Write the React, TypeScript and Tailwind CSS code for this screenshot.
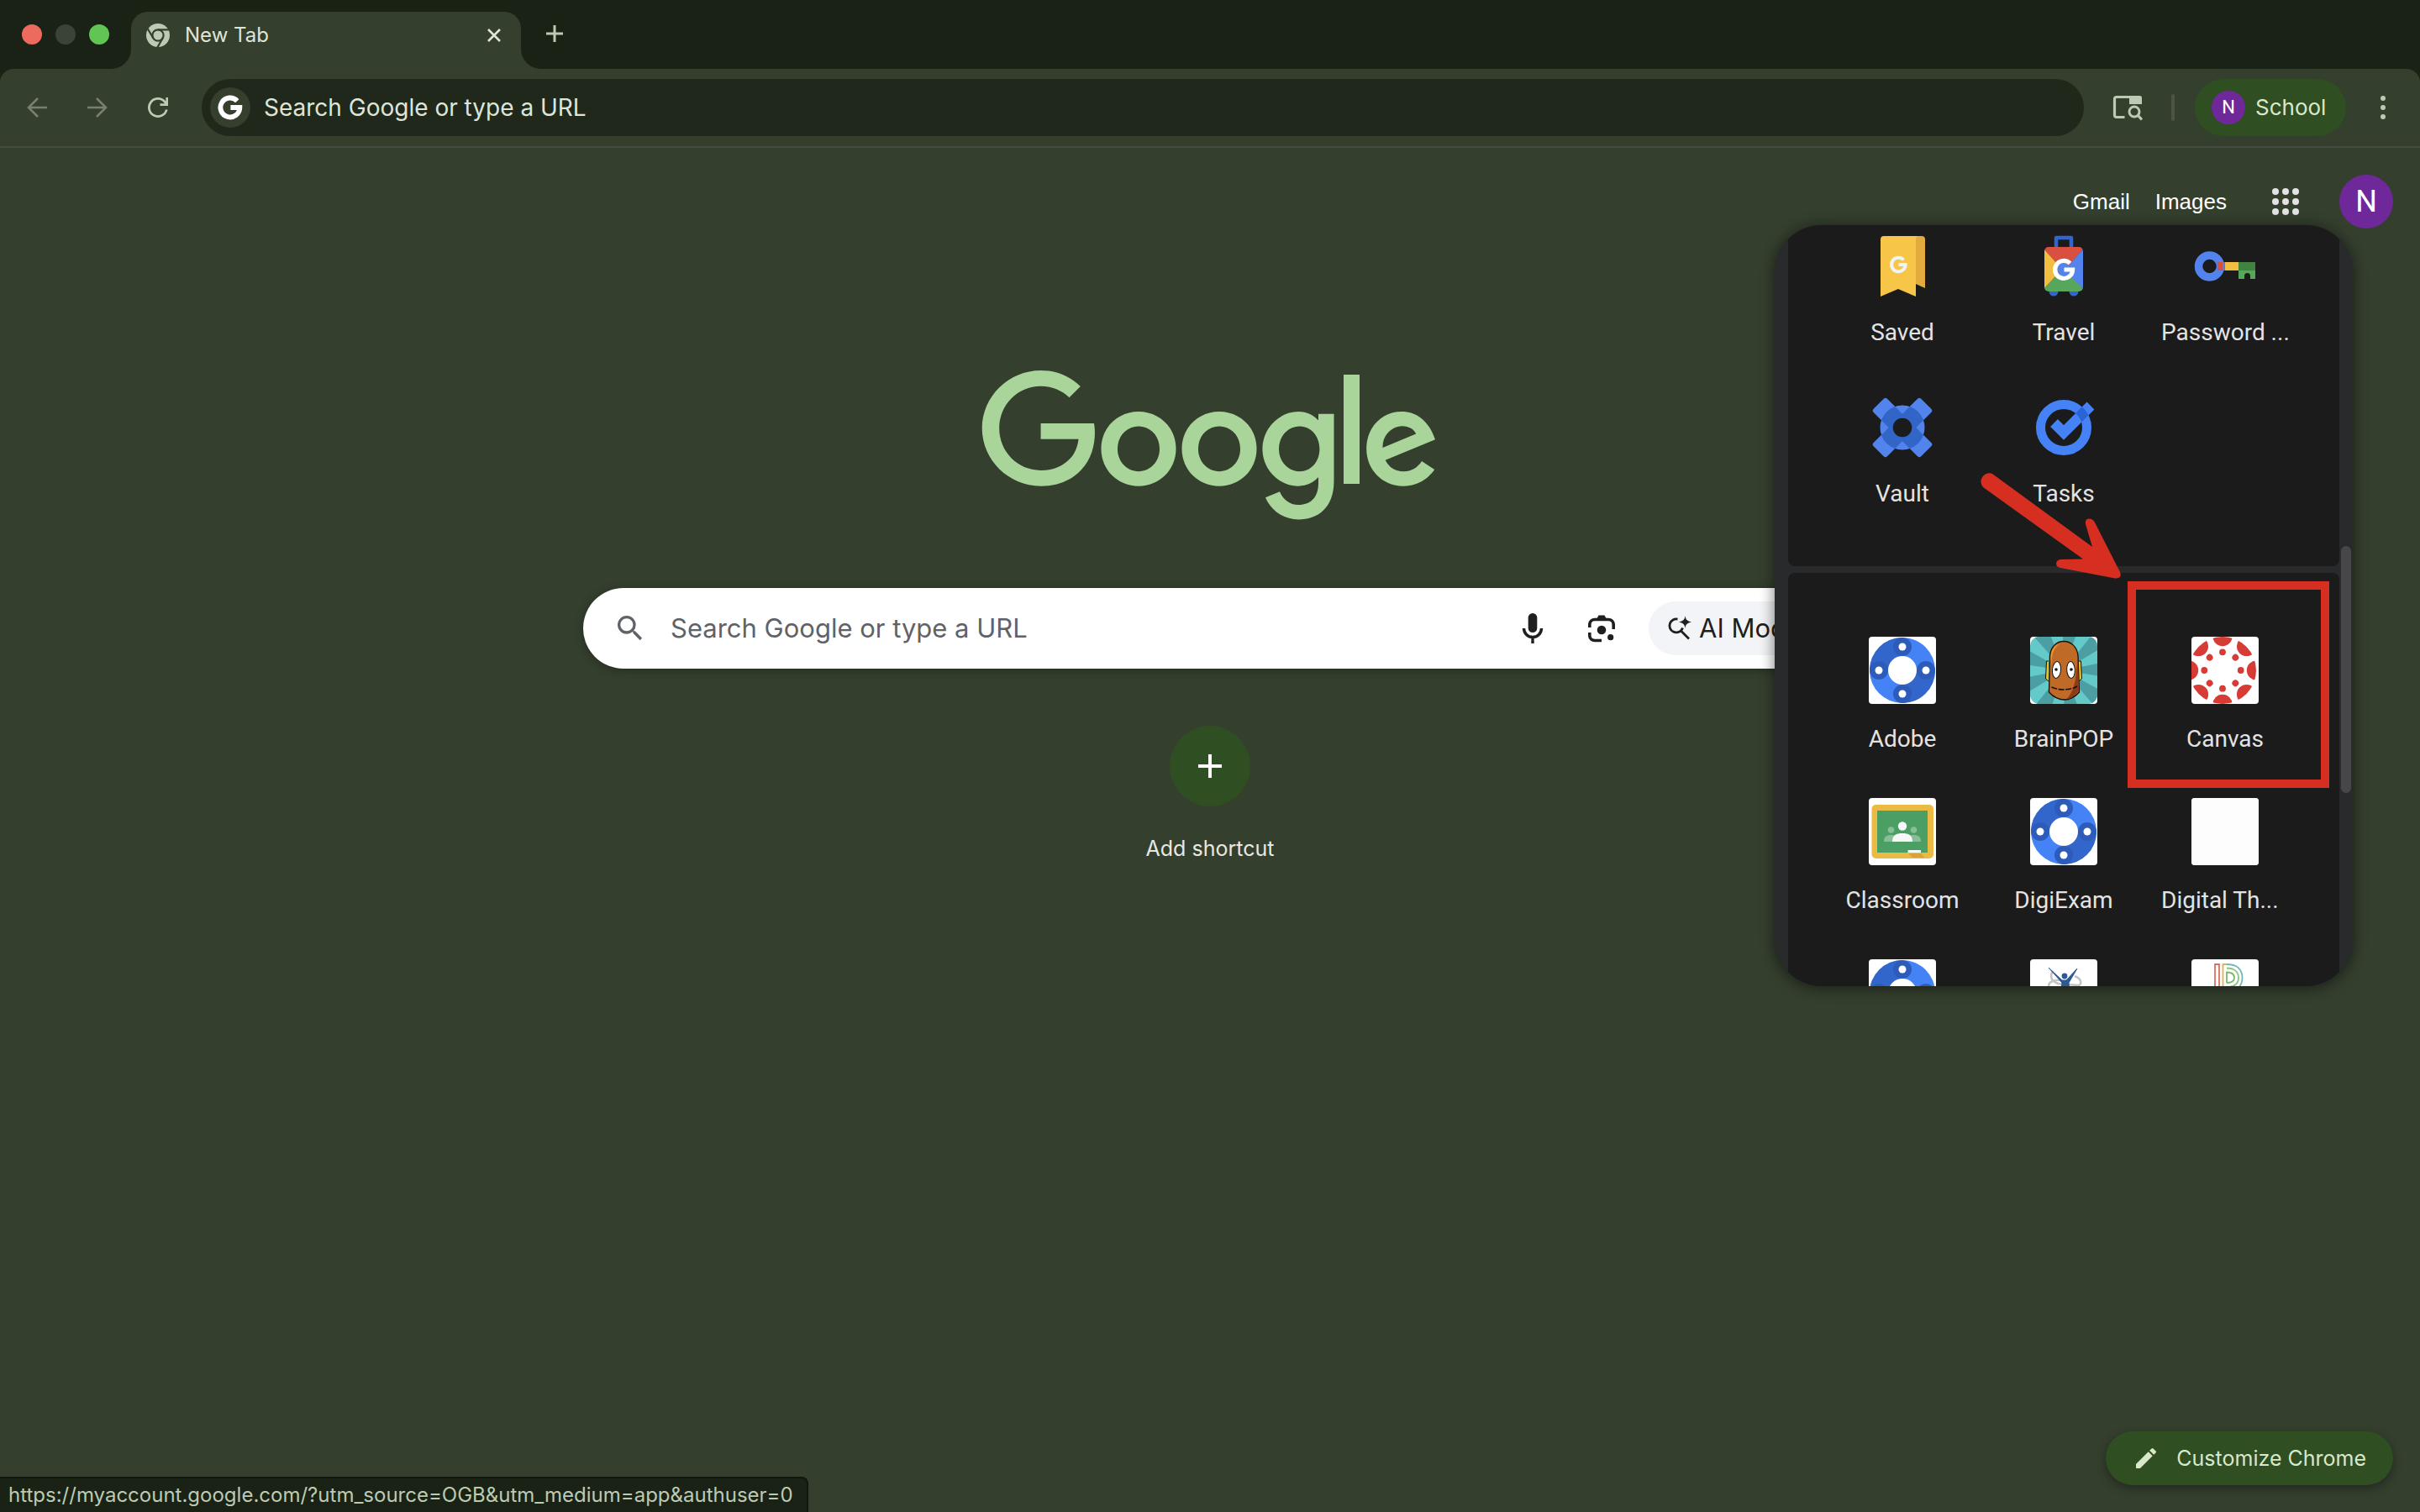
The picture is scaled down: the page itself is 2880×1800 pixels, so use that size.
import React, { useId } from "react";

const ui = "font-['Inter',sans-serif]";
const product = "font-['Roboto',sans-serif]";

function GoogleG({ className }: { className?: string }) {
  return (
    <svg viewBox="0 0 24 24" className={className} fill="none" stroke="currentColor" strokeWidth="4.4" aria-hidden="true">
      <path d="M18.2 6.1A8.6 8.6 0 1 0 20.5 12H12.3" />
    </svg>
  );
}

function ChromeMark() {
  return (
    <svg viewBox="0 0 28 28" className="size-7" aria-hidden="true">
      <circle cx="14" cy="14" r="14" fill="#bdcab3" />
      <g fill="none" stroke="#343f2e" strokeWidth="2.2">
        <circle cx="14" cy="14" r="6.6" />
        <path d="M14 7.4H27M8.3 17.3L1.6 6M19.7 17.3L13.4 28.4" />
      </g>
    </svg>
  );
}

function GoogleLogo() {
  return (
    <svg viewBox="0 0 272 92" className="h-46 w-136" fill="#a9d49a" role="img" aria-label="Google">
      <path d="M35.29 41.41V32H67c.31 1.64.47 3.58.47 5.68 0 7.06-1.93 15.79-8.15 22.01-6.05 6.3-13.78 9.66-24.02 9.66C16.32 69.35.36 53.89.36 34.91.36 15.93 16.32.47 35.3.47c10.5 0 17.98 4.12 23.6 9.49l-6.64 6.64c-4.03-3.78-9.49-6.72-16.97-6.72-13.86 0-24.7 11.17-24.7 25.03 0 13.86 10.84 25.03 24.7 25.03 8.99 0 14.11-3.61 17.39-6.89 2.66-2.66 4.41-6.46 5.1-11.65l-22.49.01z" />
      <path d="M115.75 47.18c0 12.77-9.99 22.18-22.25 22.18s-22.25-9.41-22.25-22.18C71.25 34.32 81.24 25 93.5 25s22.25 9.32 22.25 22.18zm-9.74 0c0-7.98-5.79-13.44-12.51-13.44S80.99 39.2 80.99 47.18c0 7.9 5.79 13.44 12.51 13.44s12.51-5.55 12.51-13.44z" />
      <path d="M163.75 47.18c0 12.77-9.99 22.18-22.25 22.18s-22.25-9.41-22.25-22.18c0-12.85 9.99-22.18 22.25-22.18s22.25 9.32 22.25 22.18zm-9.74 0c0-7.98-5.79-13.44-12.51-13.44s-12.51 5.46-12.51 13.44c0 7.9 5.79 13.44 12.51 13.44s12.51-5.55 12.51-13.44z" />
      <path d="M209.75 26.34v39.82c0 16.38-9.66 23.07-21.08 23.07-10.75 0-17.22-7.19-19.66-13.07l8.48-3.53c1.51 3.61 5.21 7.87 11.17 7.87 7.31 0 11.84-4.51 11.84-13v-3.19h-.34c-2.18 2.69-6.38 5.04-11.68 5.04-11.09 0-21.25-9.66-21.25-22.09 0-12.52 10.16-22.26 21.25-22.26 5.29 0 9.49 2.35 11.68 4.96h.34v-3.61h9.25zm-8.56 20.92c0-7.81-5.21-13.52-11.84-13.52-6.72 0-12.35 5.71-12.35 13.52 0 7.73 5.63 13.36 12.35 13.36 6.63 0 11.84-5.63 11.84-13.36z" />
      <path d="M225 3v65h-9.5V3h9.5z" />
      <path d="M262.02 54.48l7.56 5.04c-2.44 3.61-8.32 9.83-18.48 9.83-12.6 0-22.01-9.74-22.01-22.18 0-13.19 9.49-22.18 20.92-22.18 11.51 0 17.14 9.16 18.98 14.11l1.01 2.52-29.65 12.28c2.27 4.45 5.8 6.72 10.75 6.72 4.96 0 8.4-2.44 10.92-6.14zm-23.27-7.98l19.82-8.23c-1.09-2.77-4.37-4.7-8.23-4.7-4.95 0-11.84 4.37-11.59 12.93z" />
    </svg>
  );
}

/* ---------- App icons, each on an 80 x 80 grid ---------- */

function Art({ children, tile = false }: { children?: React.ReactNode; tile?: boolean }) {
  return (
    <svg viewBox="0 0 80 80" className={tile ? "size-20 shrink-0 rounded-[4px] bg-white" : "size-20 shrink-0"} aria-hidden="true">
      {children}
    </svg>
  );
}

function SavedIcon() {
  return (
    <Art>
      <path d="M54 4H63a4 4 0 0 1 4 4V66L56 61z" fill="#e2aa3f" />
      <path d="M60 4a4 4 0 0 0-4 4V76L35 67L14 76V8a4 4 0 0 1 4-4z" fill="#f7c548" />
      <path d="M41.500 32.500A8.300 8.300 0 1 0 43.600 38H35.500" fill="none" stroke="#f1f3f4" strokeWidth="4" />
    </Art>
  );
}

function TravelIcon() {
  const clip = useId();
  return (
    <Art>
      <clipPath id={clip}>
        <rect x="17" y="17" width="46" height="53" rx="5" />
      </clipPath>
      <path d="M31 19V6H49V19" fill="none" stroke="#3166ce" strokeWidth="4.500" strokeLinejoin="round" />
      <circle cx="28" cy="70" r="5.500" fill="#3166ce" />
      <circle cx="52" cy="70" r="5.500" fill="#3166ce" />
      <g clipPath={`url(#${clip})`}>
        <path d="M17 17H63V20L40 46L17 20z" fill="#d8503f" />
        <path d="M17 70H63V66L40 41L17 66z" fill="#58a55c" />
        <path d="M17 20L38 43.500L17 66z" fill="#f2be42" />
        <path d="M63 20L40 45L63 66z" fill="#5383ec" />
      </g>
      <circle cx="40" cy="44" r="8" fill="#5383ec" />
      <path d="M47.500 36.500A10.500 10.500 0 1 0 50.600 44H40.500" fill="none" stroke="#fff" strokeWidth="5.200" />
    </Art>
  );
}

function PasswordIcon() {
  return (
    <Art>
      <path d="M30 35H40V45H30z" fill="#d8503f" />
      <path d="M40 35H56V45H40z" fill="#f2be42" />
      <path d="M56 35H76V45H56z" fill="#40823f" />
      <path d="M56 45H76V55H70V51.500a3.500 3.500 0 0 0-7 0V55H56z" fill="#58a55c" />
      <circle cx="21.500" cy="40" r="13" fill="none" stroke="#5383ec" strokeWidth="9.500" />
      <path d="M30.500 35H37V45H30.500A13 13 0 0 0 30.500 35z" fill="#d8503f" />
    </Art>
  );
}

function VaultIcon() {
  const clip = useId();
  const hole = useId();
  const arms = (
    <>
      <rect x="0" y="28.500" width="80" height="23" rx="3" transform="rotate(45 40 40)" />
      <rect x="0" y="28.500" width="80" height="23" rx="3" transform="rotate(-45 40 40)" />
    </>
  );
  return (
    <Art>
      <clipPath id={clip}>
        <circle cx="40" cy="40" r="26.500" />
      </clipPath>
      <mask id={hole}>
        <rect width="80" height="80" fill="#fff" />
        <circle cx="40" cy="40" r="11.300" fill="#000" />
      </mask>
      <g mask={`url(#${hole})`}>
        <g fill="#5383ec">
          {arms}
          <circle cx="40" cy="40" r="26.500" />
        </g>
        <g fill="#3166c8" clipPath={`url(#${clip})`}>{arms}</g>
      </g>
    </Art>
  );
}

function TasksIcon() {
  const clip = useId();
  return (
    <Art>
      <clipPath id={clip}>
        <path d="M40 7a33 33 0 1 0 .01 0zM40 18a22 22 0 1 1-.01 0z" clipRule="evenodd" />
      </clipPath>
      <circle cx="40" cy="40" r="27.500" fill="none" stroke="#4482f5" strokeWidth="11" />
      <path d="M28.500 34.500L40 46L72 14" fill="none" stroke="#4482f5" strokeWidth="12.500" />
      <path d="M52 34L72 14" fill="none" stroke="#2a63d3" strokeWidth="12.500" clipPath={`url(#${clip})`} />
    </Art>
  );
}

function DialIcon() {
  return (
    <Art tile>
      <circle cx="40" cy="40" r="39" fill="#4482f5" />
      <path d="M40 40V1A39 39 0 0 0 1 40zM40 40V79A39 39 0 0 0 79 40z" fill="#3366cb" />
      {[[40, 12], [40, 68], [12, 40], [68, 40]].map(([x, y]) => (
        <g key={`${x}-${y}`}>
          <circle cx={x} cy={y} r="11" fill="#2d5bb9" />
          <circle cx={x} cy={y} r="4.500" fill="#fff" />
        </g>
      ))}
      <circle cx="40" cy="40" r="17" fill="#fff" />
    </Art>
  );
}

function BrainPopIcon() {
  const clip = useId();
  return (
    <Art tile>
      <clipPath id={clip}>
        <rect width="80" height="80" rx="11" />
      </clipPath>
      <g clipPath={`url(#${clip})`}>
        <rect width="80" height="80" fill="#63c9c9" />
        {[0, 1, 2, 3, 4, 5, 6, 7, 8].map((i) => (
          <path key={i} d="M40 40L48 -30L72 -22z" fill="#4b9fa2" transform={`rotate(${i * 40 - 8} 40 40)`} />
        ))}
      </g>
      <path d="M22 29H19.500L18.500 50L22 53M58 29H60.500L61.500 50L58 53" fill="#e8c22c" stroke="#111" strokeWidth="1" />
      <path d="M22.500 66L23.500 22C25 11 32 5.500 40 5.500S55.500 11 57 22L58.500 66C53 72 47 75 41 75S28 72 22.500 66z" fill="#c06a27" stroke="#1a0f06" strokeWidth="1.300" />
      <path d="M58 64C53 71 48 74 43 74.500C51 67 54 55 55 40L57 25z" fill="#8f3b17" />
      <path d="M25.500 34C25 20 29 11 37 7.500C28 10 24.500 17 24.500 26z" fill="#f0962f" />
      <g fill="#fff" stroke="#111" strokeWidth="1">
        <ellipse cx="31.500" cy="39.500" rx="5" ry="10" transform="rotate(5 31.500 39.500)" />
        <ellipse cx="48.500" cy="39.500" rx="4.800" ry="10" transform="rotate(-3 48.500 39.500)" />
      </g>
      <circle cx="31" cy="39" r="1.800" fill="#111" />
      <circle cx="49" cy="39" r="1.800" fill="#111" />
      <path d="M25.500 60C34 64 48 64 56 59" fill="none" stroke="#1a0f06" strokeWidth="1.500" strokeDasharray="7 1.500" />
    </Art>
  );
}

function CanvasIcon() {
  const clip = useId();
  return (
    <Art tile>
      <clipPath id={clip}>
        <circle cx="37" cy="40" r="40" />
      </clipPath>
      <g fill="#d63c35">
        {[0, 45, 90, 135, 180, 225, 270, 315].map((a) => (
          <g key={a} transform={`rotate(${a} 37 40)`}>
            <circle cx="37" cy="18.300" r="3.900" />
            <g clipPath={`url(#${clip})`}>
              <circle cx="37" cy="-.5" r="11.700" />
            </g>
          </g>
        ))}
      </g>
    </Art>
  );
}

function ClassroomIcon() {
  return (
    <Art tile>
      <rect x="3.500" y="8" width="73.500" height="64" rx="5" fill="#ebba42" />
      <rect x="10" y="15" width="60" height="50" fill="#4c9f64" />
      <g fill="#86bf97">
        <circle cx="26.500" cy="38" r="3.800" />
        <circle cx="53.500" cy="38" r="3.800" />
        <path d="M18 52c0-6 3-8 8.500-8s8 2 8 8zM45.500 52c0-6 2.500-8 8-8s8.500 2 8.500 8z" />
      </g>
      <g fill="#f6f7f6">
        <circle cx="40" cy="33.500" r="5.200" />
        <path d="M28 52c0-8 5-10 12-10s12 2 12 10z" />
        <rect x="46.500" y="62" width="15.500" height="3.500" />
      </g>
      <path d="M46.500 65.500H62L66 71H52z" fill="#d9a437" />
    </Art>
  );
}

function DigitalIcon() {
  return (
    <Art tile>
      <rect width="80" height="80" fill="#fdfdfd" />
    </Art>
  );
}

function FigureIcon() {
  return (
    <Art tile>
      <g fill="none" stroke="#c4c4c4" strokeWidth="2.500">
        <path d="M27 14C21 24 30 30 42 30S62 34 60 26C59 23 56 21 53 20" />
        <path d="M22 32C22 27 28 24 38 25" />
      </g>
      <path d="M22 10L38 28L36 42H47L46 28L56 11L43 25H38z" fill="#2d5a96" stroke="#2d5a96" strokeLinejoin="round" />
      <circle cx="41" cy="20" r="3.400" fill="#2d5a96" />
    </Art>
  );
}

function StripesIcon() {
  return (
    <Art tile>
      <g fill="none" strokeWidth="1.800">
        <path d="M28 60V6H33V60" stroke="#dd6f5f" />
        <path d="M37.500 60V6H43" stroke="#e2b04e" />
        <path d="M42 6C54 6 60.500 12 60.500 22S54 38 43 38" stroke="#6db8b8" />
        <path d="M42 10.500C51 10.500 56 15 56 22S51 33 42 33V60" stroke="#8fc27a" />
        <path d="M42 28V15.500C48 15.500 51 18 51 22S48 28 42 28" stroke="#7ab86a" />
      </g>
    </Art>
  );
}

type App = { name: string; icon: React.ReactNode; clipped?: boolean };

const googleApps: App[] = [
  { name: "Saved", icon: <SavedIcon /> },
  { name: "Travel", icon: <TravelIcon /> },
  { name: "Password ...", icon: <PasswordIcon />, clipped: true },
  { name: "Vault", icon: <VaultIcon /> },
  { name: "Tasks", icon: <TasksIcon /> },
];

const schoolApps: App[] = [
  { name: "Adobe", icon: <DialIcon /> },
  { name: "BrainPOP", icon: <BrainPopIcon /> },
  { name: "Canvas", icon: <CanvasIcon /> },
  { name: "Classroom", icon: <ClassroomIcon /> },
  { name: "DigiExam", icon: <DialIcon /> },
  { name: "Digital Th...", icon: <DigitalIcon />, clipped: true },
];

const moreIcons = [<DialIcon />, <FigureIcon />, <StripesIcon />];

function AppTile({ app, gap }: { app: App; gap: string }) {
  return (
    <a href="#" className={`flex h-48 flex-col items-center ${gap}`}>
      {app.icon}
      <span className={app.clipped ? "w-[152px] text-left text-[28px] leading-10 whitespace-nowrap" : "text-[28px] leading-10 whitespace-nowrap"}>
        {app.name}
      </span>
    </a>
  );
}

function AppsPanel() {
  return (
    <div className="absolute top-[92px] right-20">
      <div className={`flex h-[906px] w-[688px] overflow-hidden rounded-[56px] bg-[#292a2c] pl-4 text-[#e3e3e3] shadow-[0_2px_16px_2px_rgba(0,0,0,0.45)] ${product}`}>
        <div className="flex flex-1 flex-col gap-2">
          <div className="grid shrink-0 grid-cols-3 rounded-b-lg bg-[#1b1b1b] px-10 pt-[9px] pb-[13px]">
            {googleApps.map((app) => (
              <AppTile key={app.name} app={app} gap="gap-[19px]" />
            ))}
          </div>
          <div className="grid shrink-0 grid-cols-3 rounded-t-lg bg-[#1b1b1b] px-10 pt-19">
            {schoolApps.map((app) => (
              <AppTile key={app.name} app={app} gap="gap-[22px]" />
            ))}
            {moreIcons.map((icon, i) => (
              <a key={i} href="#" aria-label="School app" className="flex h-48 justify-center">
                {icon}
              </a>
            ))}
          </div>
        </div>
        <div className="w-4 px-[2px] pt-[382px]">
          <div className="h-[294px] rounded-full bg-[#474749]" />
        </div>
      </div>

      <div className="absolute top-[424px] right-7 h-[246px] w-60 border-10 border-[#d62f22]" />
      <svg viewBox="0 0 180 140" className="absolute top-[287px] left-[238px] h-[140px] w-[180px]" aria-hidden="true">
        <path
          d="M21 9L140 96L132 69Q131 63 136 62.500Q141 62.500 143 67L173 126Q176 133.500 167 133.500L102 121Q97 120 97 115.500Q98 111 103 111L129 110.500L10 25A10 10 0 0 1 21 9z"
          fill="#d62f22"
        />
      </svg>
    </div>
  );
}

function BrowserChrome() {
  return (
    <header className={`bg-[#192214] ${ui}`}>
      <div className="flex h-[82px] items-end">
        <div className="flex items-center gap-4 self-center pr-[2px] pl-[26px]">
          <button aria-label="Close window" className="size-6 rounded-full bg-[#ec6a5e]" />
          <button aria-label="Minimise window" className="size-6 rounded-full bg-[#3a4338]" />
          <button aria-label="Zoom window" className="size-6 rounded-full bg-[#61c554]" />
        </div>
        <div className="size-6 bg-[#343f2e]">
          <div className="size-full rounded-br-3xl bg-[#192214]" />
        </div>
        <div className="flex h-[68px] w-116 items-center rounded-t-[20px] bg-[#343f2e] pr-5 pb-3 pl-[18px]">
          <ChromeMark />
          <span className="ml-[18px] flex-1 text-[24px] leading-8 text-[#dfe4d8]">New Tab</span>
          <button aria-label="Close tab" className="flex size-6 items-center justify-center">
            <svg viewBox="0 0 16 16" className="size-4" stroke="#e0e4da" strokeWidth="2.6" aria-hidden="true">
              <path d="M1 1L15 15M15 1L1 15" />
            </svg>
          </button>
        </div>
        <div className="size-6 bg-[#343f2e]">
          <div className="size-full rounded-bl-3xl bg-[#192214]" />
        </div>
        <button aria-label="New tab" className="mb-8 ml-[6px] flex size-5 items-center justify-center">
          <svg viewBox="0 0 20 20" className="size-5" stroke="#bdcab3" strokeWidth="3" aria-hidden="true">
            <path d="M10 0V20M0 10H20" />
          </svg>
        </button>
      </div>

      <div className="flex h-[94px] items-center rounded-t-2xl border-b-2 border-[#464b41] bg-[#343f2e] pl-8">
        <button aria-label="Back" className="size-6">
          <svg viewBox="0 0 24 24" className="size-6" fill="none" stroke="#778070" strokeWidth="2.6" aria-hidden="true">
            <path d="M24 12H2M13 1L2 12L13 23" />
          </svg>
        </button>
        <button aria-label="Forward" className="ml-12 size-6">
          <svg viewBox="0 0 24 24" className="size-6" fill="none" stroke="#778070" strokeWidth="2.6" aria-hidden="true">
            <path d="M0 12H22M11 1L22 12L11 23" />
          </svg>
        </button>
        <button aria-label="Reload" className="ml-12 size-6">
          <svg viewBox="0 0 24 24" className="size-6" fill="none" stroke="#bdcab3" strokeWidth="2.8" aria-hidden="true">
            <path d="M22.300 14.500A10.600 10.600 0 1 1 20 5L22.500 8.500M22.800 0V8.600H14.500" />
          </svg>
        </button>
        <div className="ml-10 flex h-[68px] flex-1 items-center rounded-full bg-[#1f281a] pl-[10px]">
          <span className="flex size-12 items-center justify-center rounded-full bg-[#343f2e]">
            <GoogleG className="size-8 text-white" />
          </span>
          <input
            aria-label="Address and search bar"
            placeholder="Search Google or type a URL"
            className="ml-4 min-w-0 flex-1 bg-transparent text-[28px] leading-10 outline-none placeholder:text-[#dfe4d8]"
          />
        </div>
        <button aria-label="Search side panel" className="ml-[34px] h-8 w-9">
          <svg viewBox="0 0 36 32" className="h-8 w-9" fill="none" stroke="#bdcab3" aria-hidden="true">
            <path d="M14.500 27.500H5a2.500 2.500 0 0 1-2.500-2.500V6A2.500 2.500 0 0 1 5 3.500H20" strokeWidth="3.200" />
            <path d="M20 2H32.500A2.500 2.500 0 0 1 35 4.500V12H20z" fill="#bdcab3" stroke="none" />
            <circle cx="26" cy="21" r="6" strokeWidth="3" />
            <path d="M30 25L35 30.500" strokeWidth="3.200" />
          </svg>
        </button>
        <span className="ml-[34px] h-8 w-1 rounded-full bg-[#4b5542]" />
        <button className="ml-6 flex h-[68px] w-45 items-center rounded-full bg-[#2f4e22] pl-5 text-[26px] leading-8 text-[#d9e7cb]">
          <span className={`mr-3 flex size-10 items-center justify-center rounded-full bg-[#6f2899] text-[22px] leading-none text-white ${product}`}>N</span>
          School
        </button>
        <button aria-label="Menu" className="mr-8 ml-8 flex w-6 flex-col items-center gap-[5px]">
          <span className="size-[6px] rounded-full bg-[#bdcab3]" />
          <span className="size-[6px] rounded-full bg-[#bdcab3]" />
          <span className="size-[6px] rounded-full bg-[#bdcab3]" />
        </button>
      </div>
    </header>
  );
}

function SearchBox() {
  return (
    <form
      className={`mt-[76px] flex h-24 w-full max-w-[1492px] items-center rounded-full bg-white pr-4 pl-9 shadow-[0_2px_12px_rgba(0,0,0,0.3)] ${ui}`}
      onSubmit={(e) => e.preventDefault()}
    >
      <svg viewBox="0 0 24 24" className="size-10 shrink-0" fill="#5f6368" aria-hidden="true">
        <path d="M15.500 14h-.79l-.28-.27A6.471 6.471 0 0 0 16 9.500 6.500 6.500 0 1 0 9.500 16c1.610 0 3.090-.59 4.230-1.570l.27.28v.79l5 4.990L20.490 19l-4.990-5zm-6 0C7.010 14 5 11.990 5 9.500S7.010 5 9.500 5 14 7.010 14 9.500 11.990 14 9.500 14z" />
      </svg>
      <input
        aria-label="Search Google or type a URL"
        placeholder="Search Google or type a URL"
        className="ml-7 min-w-0 flex-1 bg-transparent text-[31px] leading-10 outline-none placeholder:text-[#5f6368]"
      />
      <button type="button" aria-label="Voice search" className="size-10">
        <svg viewBox="0 0 40 40" className="size-10" fill="none" stroke="#1f1f1f" aria-hidden="true">
          <rect x="14.700" y="2" width="10.600" height="23" rx="5.300" fill="#1f1f1f" stroke="none" />
          <path d="M9.500 20A10.500 10.500 0 0 0 30.500 20M20 30.500V38" strokeWidth="3.400" />
        </svg>
      </button>
      <button type="button" aria-label="Search by image" className="ml-[42px] size-10">
        <svg viewBox="0 0 40 40" className="size-10" fill="none" stroke="#1f1f1f" strokeWidth="3.600" aria-hidden="true">
          <path d="M5.800 19V15A6 6 0 0 1 11.800 9.500H28.200A6 6 0 0 1 34.200 15V21M5.800 25V29A6 6 0 0 0 11.800 34.500H20" />
          <path d="M14 9L16.500 4.500H23.500L26 9z" fill="#1f1f1f" stroke="none" />
          <circle cx="20" cy="22" r="5.300" fill="#1f1f1f" stroke="none" />
          <circle cx="30.700" cy="30.700" r="3.600" fill="#1f1f1f" stroke="none" />
        </svg>
      </button>
      <button type="button" className="ml-9 flex h-16 w-52 items-center rounded-full bg-[#f3f4f7] pl-[22px] text-[31px] leading-10 whitespace-nowrap text-[#1f1f1f]">
        <svg viewBox="0 0 30 30" className="mr-2 size-[30px]" fill="none" stroke="#1f1f1f" strokeWidth="2.800" aria-hidden="true">
          <path d="M12.500 4.100A8 8 0 1 0 17.500 16.500M16 17.500L26 27.500M17 17A8 8 0 0 0 18.500 14.500" />
          <path d="M21.500 0C22.200 4.800 23.700 6.300 29 7.500C23.700 8.700 22.200 10.200 21.500 15C20.800 10.200 19.300 8.700 14 7.500C19.300 6.300 20.800 4.800 21.500 0z" fill="#1f1f1f" stroke="none" />
        </svg>
        AI Mode
      </button>
    </form>
  );
}

export default function App() {
  return (
    <div className="flex min-h-screen flex-col bg-[#343f2e]">
      <BrowserChrome />
      <main className="relative flex flex-1 flex-col">
        <nav className="flex items-center justify-end pt-8 pr-8 font-['Liberation_Sans',sans-serif] text-[26px] leading-8 text-white">
          <a href="#">Gmail</a>
          <a href="#" className="ml-[30px]">Images</a>
          <button aria-label="Google apps" className="ml-[54px] grid grid-cols-3 gap-1">
            {[0, 1, 2, 3, 4, 5, 6, 7, 8].map((i) => (
              <span key={i} className="size-2 rounded-full bg-[#e3e3e3]" />
            ))}
          </button>
          <button aria-label="Google Account" className={`ml-12 flex size-16 items-center justify-center rounded-full bg-[#6f2899] text-[36px] leading-none ${product}`}>
            N
          </button>
        </nav>

        <section className="mt-42 flex flex-col items-center">
          <GoogleLogo />
          <SearchBox />
          <button className={`mt-17 flex flex-col items-center text-[25px] leading-9 text-[#e6e8e4] ${ui}`}>
            <span className="flex size-24 items-center justify-center rounded-full bg-[#2f4e22]">
              <svg viewBox="0 0 28 28" className="size-7" stroke="#fff" strokeWidth="4" aria-hidden="true">
                <path d="M14 0V28M0 14H28" />
              </svg>
            </span>
            <span className="mt-8">Add shortcut</span>
          </button>
        </section>

        <AppsPanel />

        <footer className={`mt-auto flex items-end justify-between ${ui}`}>
          <p className="h-[42px] rounded-tr-lg border-t-2 border-r-2 border-[#11170e] bg-[#192214] pr-4 pl-[10px] text-[24px] leading-10 text-[#bdcab3]">
            https://myaccount.google.com/?utm_source=OGB&amp;utm_medium=app&amp;authuser=0
          </p>
          <button className="mr-8 mb-8 flex h-16 items-center rounded-full bg-[#2f4e22] pr-8 pl-8 text-[25px] leading-8 text-[#d9e7cb] shadow-[0_4px_12px_rgba(0,0,0,0.35)]">
            <svg viewBox="0 0 24 24" className="mr-5 size-8" fill="#d9e7cb" aria-hidden="true">
              <path d="M3 17.250V21h3.750L17.810 9.940l-3.750-3.750L3 17.250zM20.710 7.040a1 1 0 0 0 0-1.410l-2.340-2.340a1 1 0 0 0-1.410 0l-1.830 1.830 3.750 3.750 1.830-1.830z" />
            </svg>
            Customize Chrome
          </button>
        </footer>
      </main>
    </div>
  );
}
